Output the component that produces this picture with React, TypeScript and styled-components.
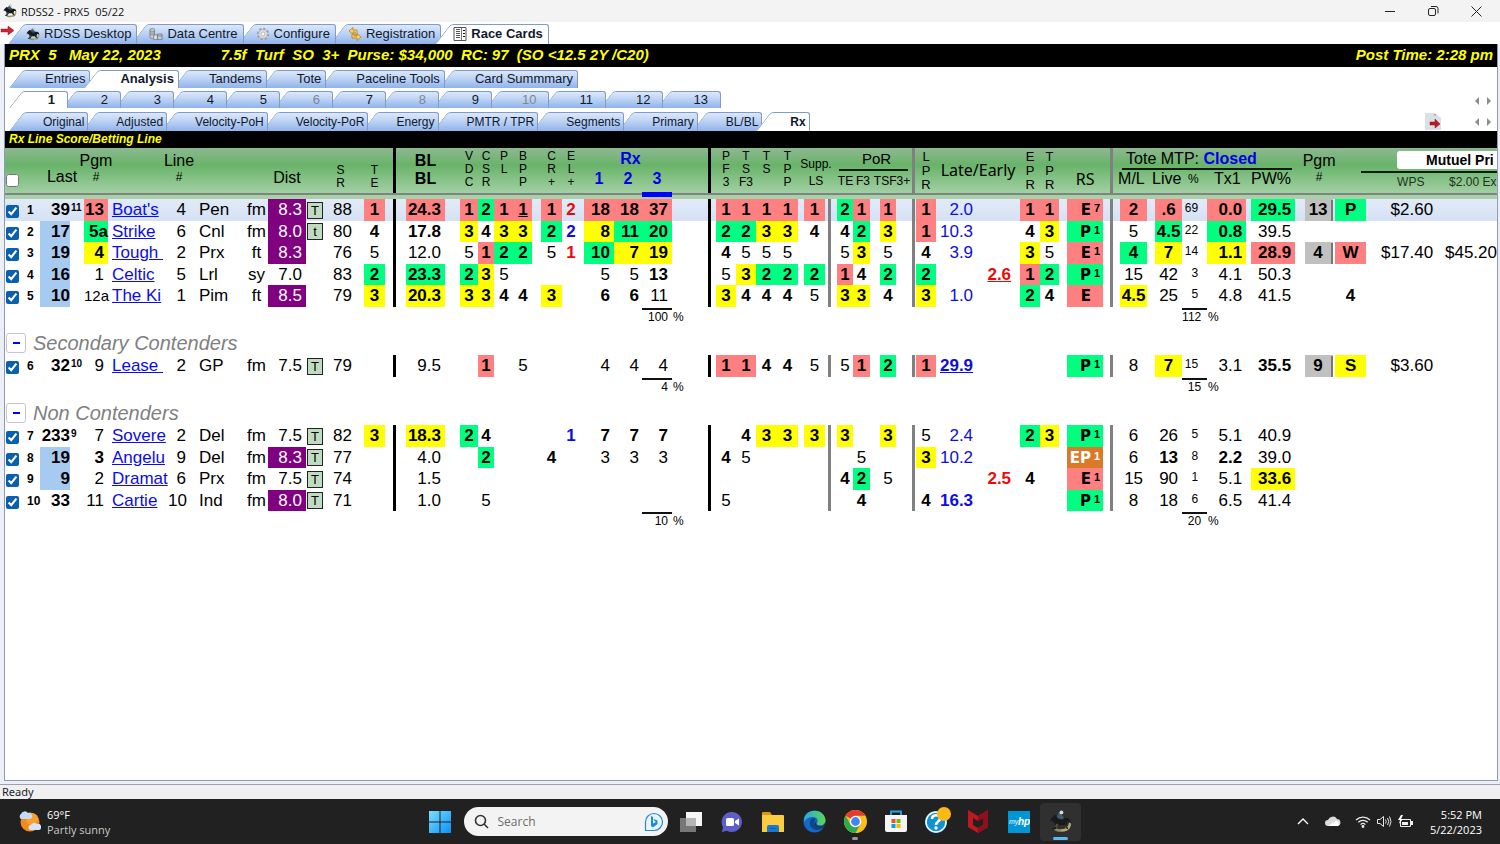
import React from "react";
import styled, { createGlobalStyle, css } from "styled-components";

const Global = createGlobalStyle`
  * { box-sizing: border-box; }
  body { margin: 0; background: #eceef8; font-family: "Liberation Sans", Arial, sans-serif; }
  button { font: inherit; color: inherit; border: 0; background: none; padding: 0; }
`;

const Page = styled.div`
  display: flex;
  flex-direction: column;
  min-height: 100vh;
  overflow: hidden;
`;

/* ---------- title bar ---------- */

const TitleBar = styled.header`
  display: flex;
  align-items: center;
  height: 22px;
  padding: 0 17px 0 3px;
  background: #f3f3f3;
`;
const Title = styled.h1`
  flex: 1;
  margin: 0 0 0 4px;
  font: 400 11px "Open Sans", sans-serif;
  color: #111;
  white-space: pre;
`;
const WindowControls = styled.div`
  display: flex;
  gap: 29px;
`;
const WindowButton = styled.button`
  width: 14px;
  height: 20px;
  svg { display: block; margin: auto; }
`;

/* ---------- tabs ---------- */

const TabStrip = styled.nav<{ $top: number }>`
  display: flex;
  align-items: flex-start;
  padding: ${(p) => p.$top}px 0 0 10px;
  background: #fff;
  isolation: isolate;
`;
const Tab = styled.button<{ $selected?: boolean; $order: number; $size?: "icon" | "number" | "small" }>`
  position: relative;
  isolation: isolate;
  display: flex;
  align-items: center;
  justify-content: flex-end;
  gap: 4px;
  flex: none;
  height: 18px;
  padding: 0 5px 0 30px;
  font-size: 13px;
  line-height: 16px;
  white-space: nowrap;
  color: #10182c;
  z-index: ${(p) => (p.$selected ? 50 : 40 - p.$order)};
  font-weight: ${(p) => (p.$selected ? 700 : 400)};
  ${(p) => p.$size === "icon" && css`height: 20px; padding: 0 6px 0 12px;`}
  ${(p) => p.$size === "number" && css`height: 17px; min-width: 53px; padding-right: 13px;`}
  ${(p) => p.$size === "small" && css`height: 19px; padding: 0 4px 0 28px; font-size: 12px;`}
  &:disabled { color: #7f8694; }

  &::before, &::after {
    content: "";
    position: absolute;
    z-index: -1;
    top: 0;
    bottom: 0;
    border-top: 1px solid #7f9cc8;
    background: ${(p) => (p.$selected ? "#fff" : "linear-gradient(#dbe8fb, #b9d0f4 50%, #8fb3ea)")};
  }
  &::before {
    left: -6px;
    width: 24px;
    border-left: 1px solid #7f9cc8;
    border-top-left-radius: 3px;
    transform: skewX(-38deg);
    transform-origin: bottom left;
  }
  &::after {
    left: 15px;
    right: 0;
    border-right: 1px solid #7f9cc8;
    border-top-right-radius: 3px;
  }
`;
const MainTabs = styled.div`
  display: flex;
  background: #fff;
  > svg { flex: none; margin: 3px 0 0; }
  > nav { padding-left: 0; }
`;
const StripTools = styled.div`
  display: flex;
  align-items: center;
  gap: 32px;
  height: 19px;
  margin-left: auto;
  padding-right: 4px;
`;
const Scroller = styled.div`
  display: flex;
  gap: 2px;
`;
const ScrollButton = styled.button`
  display: block;
  width: 9px;
  height: 18px;
`;

/* ---------- workspace ---------- */

const Workspace = styled.main`
  flex: 1;
  display: flex;
  flex-direction: column;
  margin: 0 2px 3px 4px;
  border: solid #8f98b4;
  border-width: 0 1px 1px;
  background: #fff;
  overflow: hidden;
`;
const RaceBar = styled.div`
  display: flex;
  justify-content: space-between;
  height: 23px;
  padding: 0 4px;
  background: #000;
  color: #ff0;
  font: italic 700 15px/22px "Liberation Sans", Arial, sans-serif;
  white-space: pre;
`;
const RaceInfo = styled.div`
  display: flex;
  gap: 60px;
`;
const ViewTitle = styled.h2`
  margin: 0;
  height: 17px;
  padding-left: 4px;
  background: #000;
  color: #ff0;
  font: italic 700 12px/16px "Liberation Sans", Arial, sans-serif;
`;

/* ---------- table ---------- */

const Table = styled.table`
  width: 100%;
  table-layout: fixed;
  border-collapse: separate;
  border-spacing: 0;
  font-size: 17px;
  line-height: 20px;
  white-space: nowrap;
`;
const HeadRow = styled.tr`
  height: 51px;
  background: linear-gradient(#8db890 0, #69b369 17px, #7fbf80 28px, #a3cfa5 45px, #7d867d 45px, #7d867d 47px, #a9cfab 47px, #a9cfab 51px);
`;
const Th = styled.th`
  height: 51px;
  padding: 0;
  font-weight: 400;
  font-size: 16px;
  vertical-align: top;
`;
const HeadBar = styled.div<{ $black?: boolean }>`
  width: 3px;
  height: 45px;
  margin-left: auto;
  background: ${(p) => (p.$black ? "#000" : "#808080")};
`;
const Stack = styled.div<{ $top?: number; $gap?: number; $bold?: boolean }>`
  display: flex;
  flex-direction: column;
  align-items: center;
  gap: ${(p) => p.$gap ?? 0}px;
  padding-top: ${(p) => p.$top ?? 4}px;
  line-height: 18px;
  font-weight: ${(p) => (p.$bold ? 700 : 400)};
`;
const Letters = styled.div<{ $top?: number; $large?: boolean }>`
  display: flex;
  flex-direction: column;
  align-items: center;
  padding-top: ${(p) => p.$top ?? 2}px;
  font-size: ${(p) => (p.$large ? 13 : 12)}px;
  line-height: ${(p) => (p.$large ? 14 : 13)}px;
`;
const Small = styled.span`
  font-size: 12px;
  line-height: 14px;
`;
const Tahoma = styled.span`
  font-family: "Noto Sans", sans-serif;
`;
const HeadCheck = styled.input`
  display: block;
  width: 13px;
  height: 13px;
  margin: 26px 0 0 1px;
`;
const RxHead = styled.div`
  display: grid;
  grid-template-columns: 30px 28px 30px;
  color: #0000e6;
  font-weight: 700;
  text-align: center;
  line-height: 20px;
  padding-top: 1px;
`;
const RxTitle = styled.span`
  grid-column: 1 / -1;
  padding-left: 5px;
`;
const RxColumn = styled.span<{ $current?: boolean }>`
  height: 28px;
  border-bottom: 5px solid ${(p) => (p.$current ? "#0000ff" : "transparent")};
`;
const PorHead = styled.div`
  display: grid;
  grid-template-columns: 17px 18px 1fr;
  font-size: 12px;
  line-height: 15px;
  text-align: center;
`;
const PorTitle = styled.span`
  grid-column: 1 / -1;
  margin: 0 4px 3px 2px;
  padding-left: 6px;
  border-bottom: 2px solid #101c10;
  font-size: 15px;
  line-height: 21px;
`;
const ToteHead = styled.div`
  display: grid;
  grid-template-columns: 34px 36px 26px 37px 1fr;
  padding: 2px 3px 0 5px;
  line-height: 18px;
  text-align: left;
  > ${Small} { line-height: 18px; }
`;
const ToteTitle = styled.span`
  grid-column: 1 / -1;
  margin: 0 0 0 4px;
  padding-left: 4px;
  border-bottom: 2px solid #101c10;
  strong { color: #0000e6; }
`;
const MutuelHead = styled.div`
  display: grid;
  grid-template-columns: 52px 1fr;
  padding-top: 3px;
  font-size: 12px;
  line-height: 18px;
  text-align: left;
`;
const MutuelTitle = styled.div`
  grid-column: 1 / -1;
  margin-left: -5px;
  padding: 0 0 2px 36px;
  border-bottom: 2px solid #101c10;
  span {
    display: block;
    padding-left: 29px;
    border-radius: 3px 0 0 3px;
    background: #fff;
    font: 700 14px/18px "Liberation Sans", Arial, sans-serif;
    overflow: hidden;
  }
`;
const MutuelLabel = styled.span`
  padding-left: 31px;
  color: #223022;
`;

const tones: Record<string, string> = {
  r: "background:#ff8080;font-weight:700;",
  g: "background:#00ff80;font-weight:700;",
  y: "background:#ffff00;font-weight:700;",
  k: "background:#c0c0c0;font-weight:700;",
  l: "background:#a6caf0;font-weight:700;",
  o: "background:#d97a28;font-weight:700;color:#fff;",
  p: "background:#800080;color:#fff;",
  b: "font-weight:700;",
  u: "text-decoration:underline;",
  B: "color:#0c0ce8;",
  R: "color:#f00808;",
};

const BodyRow = styled.tr<{ $current?: boolean }>`
  height: 22px;
  &:nth-child(even) { height: 21px; }
  ${(p) => p.$current && css`background: linear-gradient(#e2eaf7, #d5e2f4);`}
`;
const Td = styled.td<{ $tone: string; $align: string; $pad: number }>`
  padding: 0;
  text-align: ${(p) => p.$align};
  ${(p) => (p.$align === "right" ? `padding-right:${p.$pad}px;` : `padding-left:${p.$pad}px;`)}
  ${(p) => p.$tone.split("").map((t) => tones[t]).join("")}
`;
const BarTd = styled.td<{ $black?: boolean }>`
  padding: 0;
  border-right: 3px solid ${(p) => (p.$black ? "#000" : "#808080")};
`;
const RowNumber = styled.label`
  display: block;
  font: 700 12px/18px "Liberation Sans", Arial, sans-serif;
`;
const Tiny = styled.span`
  display: block;
  height: 20px;
  font-size: 10px;
  line-height: 16px;
  font-weight: 700;
`;
const Percent = styled.span`
  display: block;
  height: 20px;
  font-size: 12px;
  line-height: 16px;
`;
const Tight = styled.span`
  font-size: 15px;
`;
const HorseLink = styled.a`
  color: #0c0ce8;
`;
const TurfBox = styled.span`
  display: block;
  width: 16px;
  height: 17px;
  margin: 0 auto;
  border: 1px solid #222;
  background: #c0dcc0;
  font-size: 13px;
  line-height: 16px;
  text-align: center;
`;
const RowCheck = styled.input`
  display: block;
  width: 13px;
  height: 13px;
  margin: 3px 0 0 1px;
  accent-color: #0a60b0;
`;
const RunStyle = styled.div`
  display: flex;
  justify-content: flex-end;
  font: 700 15px/20px "DejaVu Sans", sans-serif;
  sup {
    width: 12px;
    padding-left: 3px;
    font: 700 11px/17px "Liberation Sans", Arial, sans-serif;
    vertical-align: top;
    text-align: left;
  }
`;
const ToteNumber = styled.span`
  display: block;
  height: 21px;
  border-right: 2px solid #777;
  text-align: center;
`;
const TotalRow = styled.tr`
  height: 24px;
  font-size: 12px;
  vertical-align: top;
  line-height: 15px;
`;
const TotalTd = styled.td<{ $pad: number }>`
  padding: 1px ${(p) => p.$pad}px 0 0;
  text-align: right;
  span {
    display: block;
    margin-right: -${(p) => p.$pad}px;
    padding-right: ${(p) => p.$pad}px;
    border-top: 2px solid #111;
  }
`;
const UnitTd = styled.td`
  padding: 3px 0 0 0;
  text-indent: 1px;
`;
const GroupCell = styled.td`
  height: 24px;
  padding: 0 0 0 1px;
`;
const GroupHeading = styled.div`
  display: flex;
  align-items: center;
  gap: 7px;
  height: 24px;
  color: #808080;
  font: italic 400 20px/22px "Liberation Sans", Arial, sans-serif;
`;
const Collapse = styled.button`
  display: flex;
  align-items: center;
  justify-content: center;
  width: 20px;
  height: 20px;
  border: 1px solid #c4c4d4;
  border-radius: 3px;
  background: #fff;
  &::after { content: ""; width: 7px; height: 2px; background: #00f; }
`;

/* ---------- footer ---------- */

const StatusBar = styled.div`
  height: 15px;
  padding-left: 2px;
  border-top: 1px solid #9aa0ad;
  background: #f0f0f0;
  font: 11px/13px "Noto Sans", sans-serif;
  color: #1c1c2c;
`;
const Taskbar = styled.footer`
  display: grid;
  grid-template-columns: 1fr auto 1fr;
  align-items: center;
  height: 45px;
  padding: 0 18px;
  background: #212121;
  color: #fff;
  font: 11px/15px "Open Sans", sans-serif;
`;
const Weather = styled.div`
  display: flex;
  align-items: center;
  gap: 6px;
  span { display: block; }
  span + span { color: #c9c9c9; }
`;
const Apps = styled.div`
  display: flex;
  align-items: center;
  margin-left: 9px;
`;
const SearchBox = styled.label`
  display: flex;
  align-items: center;
  gap: 9px;
  width: 204px;
  height: 29px;
  margin: 0 3px 0 13px;
  padding: 0 4px 0 10px;
  border-radius: 15px;
  background: #f3f3f3;
  svg { flex: none; }
`;
const SearchInput = styled.input`
  flex: 1;
  min-width: 0;
  border: 0;
  padding: 0;
  background: none;
  font: 12px "Open Sans", sans-serif;
  &::placeholder { color: #6c6c6c; opacity: 1; }
`;
const AppButton = styled.button<{ $state?: "running" | "active" }>`
  position: relative;
  display: flex;
  align-items: center;
  justify-content: center;
  width: 41px;
  height: 38px;
  border-radius: 4px;
  background: ${(p) => (p.$state === "active" ? "#303030" : "none")};
  &::after {
    content: "";
    position: absolute;
    bottom: 1px;
    height: 3px;
    border-radius: 2px;
    width: ${(p) => (p.$state === "active" ? 15 : p.$state === "running" ? 6 : 0)}px;
    background: ${(p) => (p.$state === "active" ? "#5fb8f0" : "#9a9a9a")};
  }
`;
const Start = styled.button`
  display: block;
  width: 22px;
  height: 22px;
`;
const Tray = styled.div`
  display: flex;
  align-items: center;
  justify-content: flex-end;
`;
const TrayIcons = styled.div`
  display: flex;
  align-items: center;
  gap: 6px;
  margin-right: 16px;
  svg:nth-child(1) { margin-right: 10px; }
  svg:nth-child(2) { margin-right: 8px; }
`;
const Clock = styled.div`
  text-align: right;
  span { display: block; }
`;

/* ---------- icons ---------- */

const HorseIcon = ({ size = 14 }: { size?: number }) => (
  <svg width={size} height={size} viewBox="0 0 24 24" aria-hidden="true">
    <path d="M6 18c3 3 11 3 14-1l2 1c-3 6-14 6-17 2z" fill="#8a9065" />
    <path d="M12 20c5 1 8-2 9-7l2 1c0 6-5 9-10 8z" fill="#b0aa78" />
    <path d="M2 9l4-4 3 1 4 2 6 0 3 2 1 4-2-2-2 0-1 4 2 3-1 1-4-4-5 0-3 4-4 0 1-1 2-1 0-4-3-3-2 1z" fill="#171b1f" />
    <path d="M8 7l2-4 3-2 2 2-2 2 3 3-2 2-4-1z" fill="#435a67" />
    <circle cx="13" cy="2.500" r="2" fill="#d9dadb" />
    <path d="M6 17l2-3 2 1-2 4zM16 15l3 3-2 1z" fill="#5f4a33" />
  </svg>
);
const RedArrow = () => (
  <svg width="14" height="11" viewBox="0 0 14 11" aria-hidden="true">
    <path d="M1 4h7V1l6 4.500-6 4.500V7H1z" fill="#cf2430" stroke="#8e1820" strokeWidth=".5" />
  </svg>
);
const DataIcon = () => (
  <svg width="14" height="14" viewBox="0 0 15 14" aria-hidden="true">
    <g stroke="#6f7478" strokeWidth=".8">
      <path d="M1 2q2.500-2 5 0v9q-2.500 1.500-5 0z" fill="#cfd3d2" /><path d="M1 4h5M1 6h5M1 8h5" />
      <path d="M5 8h4v5H5z" fill="#dfe3e8" /><path d="M9 7h5v6H9z" fill="#b9cbe6" /><path d="M9 9h5" />
    </g>
  </svg>
);
const GearIcon = () => (
  <svg width="14" height="14" viewBox="0 0 14 14" aria-hidden="true">
    <circle cx="7" cy="7" r="5.200" fill="#e4e6e9" stroke="#9da2a8" strokeWidth="2" strokeDasharray="2.400 1.600" />
    <circle cx="7" cy="7" r="4.300" fill="#dfe2e6" stroke="#aaaeb4" strokeWidth=".8" />
    <circle cx="7" cy="7" r="2" fill="#f7f7f7" stroke="#999" strokeWidth=".6" />
  </svg>
);
const RegisterIcon = () => (
  <svg width="14" height="14" viewBox="0 0 14 14" aria-hidden="true">
    <path d="M1 4l4-3.500V3h4v5H7V5H5v2.500z" fill="#f7cf62" stroke="#bb7d1e" strokeWidth=".8" />
    <path d="M13 10l-4 3.500V11H4V7h2v2h3V6.500z" fill="#f7cf62" stroke="#bb7d1e" strokeWidth=".8" />
  </svg>
);
const CardIcon = () => (
  <svg width="14" height="14" viewBox="0 0 14 14" aria-hidden="true">
    <path d="M1 .5h12v13H1z" fill="#fff" stroke="#555" />
    <path d="M3 2.500h4M3 4.500h4M3 6.500h4M3 8.500h4M3 10.500h4" stroke="#555" />
    <path d="M8.500 1v12" stroke="#777" /><path d="M10 3.500h2M10 6.500h2M10 9.500h2" stroke="#111" />
  </svg>
);
const ExitIcon = () => (
  <svg width="16" height="17" viewBox="0 0 16 17" aria-hidden="true">
    <path d="M0 0h12l4 4v13H0z" fill="#dcdfe6" /><path d="M10 0l6 5V0z" fill="#fff" /><path d="M10 1v2" stroke="#889" />
    <path d="M5 9h5V6l5 5-5 4v-3H5z" fill="#c01822" stroke="#7c1016" strokeWidth=".5" />
  </svg>
);
const Scroll = () => (
  <Scroller>
    <ScrollButton aria-label="Scroll left">
      <svg width="9" height="10" viewBox="0 0 9 10"><path d="M6 1v8L2 5z" fill="#8c8c8c" /></svg>
    </ScrollButton>
    <ScrollButton aria-label="Scroll right">
      <svg width="9" height="10" viewBox="0 0 9 10"><path d="M3 1v8l4-4z" fill="#8c8c8c" /></svg>
    </ScrollButton>
  </Scroller>
);

/* ---------- data ---------- */

type Column = { key?: string; w: number; align?: "left" | "right" | "center"; pad?: number; bar?: "black" | "gray" };
const gap = (w: number): Column => ({ w });
const num = (key: string, w: number): Column => ({ key, w, align: "center" });
const right = (key: string, w: number, pad: number): Column => ({ key, w, align: "right", pad });

const columns: Column[] = [
  { key: "check", w: 19 }, { key: "n", w: 16, pad: 3 }, right("last", 30, 0), { key: "sup", w: 14, pad: 1 },
  right("pgm", 24, 4), { key: "name", w: 60, pad: 4 }, right("line", 22, 4), { key: "trk", w: 55, pad: 9 },
  num("surf", 23), right("dist", 38, 4), num("turf", 18), right("sr", 33, 5), gap(7), num("te", 21),
  gap(8), { w: 3, bar: "black" }, gap(10), right("bl", 39, 4), gap(15),
  num("v", 18), num("c", 16), num("p", 20), num("b", 18), gap(9), num("cr", 21), num("el", 18), gap(4),
  right("r1", 30, 4), right("r2", 28, 3), right("r3", 30, 4), { key: "unit", w: 36, pad: 1 }, { w: 3, bar: "black" }, gap(5),
  num("pf", 20), num("tsf", 20), num("ts", 21), num("tpp", 21), gap(6), num("ls", 21), gap(3), { w: 3, bar: "gray" }, gap(6),
  num("pte", 16), num("pf3", 17), gap(10), num("ptsf", 16), gap(16), { w: 3, bar: "gray" }, gap(1),
  num("lpr", 20), right("late", 37, 0), right("early", 38, 0), gap(9),
  num("epr", 20), num("tpr", 19), gap(8), right("rs", 36, 0), { w: 10, bar: "gray" }, gap(7),
  num("ml", 27), gap(8), num("live", 27), right("pct", 25, 9), right("tx", 39, 4), gap(5), right("pw", 44, 4), gap(10),
  num("tpgm", 28), gap(2), num("pos", 31), right("wps", 67, 0), right("ex", 64, 0),
];

type Row = Record<string, string>;
const primary: Row[] = [
  { n: "1", last: "b|39", sup: "11", pgm: "r|13", name: "Boat's", line: "4", trk: "Pen", surf: "fm", dist: "p|8.3", turf: "T", sr: "88", te: "r|1", bl: "r|24.3", v: "r|1", c: "g|2", p: "r|1", b: "ru|1", cr: "r|1", el: "bR|2", r1: "r|18", r2: "r|18", r3: "r|37", pf: "r|1", tsf: "r|1", ts: "r|1", tpp: "r|1", ls: "r|1", pte: "g|2", pf3: "r|1", ptsf: "r|1", lpr: "r|1", late: "B|2.0", epr: "r|1", tpr: "r|1", rs: "r|E7", ml: "r|2", live: "r|.6", pct: "69", tx: "r|0.0", pw: "g|29.5", tpgm: "k|13", pos: "g|P", wps: "$2.60" },
  { n: "2", last: "l|17", pgm: "g|5a", name: "Strike", line: "6", trk: "Cnl", surf: "fm", dist: "p|8.0", turf: "t", sr: "80", te: "b|4", bl: "b|17.8", v: "y|3", c: "b|4", p: "y|3", b: "y|3", cr: "g|2", el: "bB|2", r1: "y|8", r2: "g|11", r3: "g|20", pf: "g|2", tsf: "g|2", ts: "y|3", tpp: "y|3", ls: "b|4", pte: "b|4", pf3: "g|2", ptsf: "y|3", lpr: "r|1", late: "B|10.3", epr: "b|4", tpr: "y|3", rs: "g|P1", ml: "5", live: "g|4.5", pct: "22", tx: "g|0.8", pw: "39.5" },
  { n: "3", last: "l|19", pgm: "y|4", name: "Tough\u00a0", line: "2", trk: "Prx", surf: "ft", dist: "p|8.3", sr: "76", te: "5", bl: "12.0", v: "5", c: "r|1", p: "g|2", b: "g|2", cr: "5", el: "bR|1", r1: "g|10", r2: "y|7", r3: "y|19", pf: "b|4", tsf: "5", ts: "5", tpp: "5", pte: "5", pf3: "y|3", ptsf: "5", lpr: "b|4", late: "B|3.9", epr: "y|3", tpr: "5", rs: "r|E1", ml: "g|4", live: "y|7", pct: "14", tx: "y|1.1", pw: "r|28.9", tpgm: "k|4", pos: "r|W", wps: "$17.40", ex: "$45.20" },
  { n: "4", last: "l|16", pgm: "1", name: "Celtic", line: "5", trk: "Lrl", surf: "sy", dist: "7.0", sr: "83", te: "g|2", bl: "g|23.3", v: "g|2", c: "y|3", p: "5", r1: "5", r2: "5", r3: "b|13", pf: "5", tsf: "y|3", ts: "g|2", tpp: "g|2", ls: "g|2", pte: "r|1", pf3: "b|4", ptsf: "g|2", lpr: "g|2", early: "buR|2.6", epr: "r|1", tpr: "g|2", rs: "g|P1", ml: "15", live: "42", pct: "3", tx: "4.1", pw: "50.3" },
  { n: "5", last: "l|10", pgm: "12a", name: "The Ki", line: "1", trk: "Pim", surf: "ft", dist: "p|8.5", sr: "79", te: "y|3", bl: "y|20.3", v: "y|3", c: "y|3", p: "b|4", b: "b|4", cr: "y|3", r1: "b|6", r2: "b|6", r3: "11", pf: "y|3", tsf: "b|4", ts: "b|4", tpp: "b|4", ls: "5", pte: "y|3", pf3: "y|3", ptsf: "b|4", lpr: "y|3", late: "B|1.0", epr: "g|2", tpr: "b|4", rs: "r|E", ml: "y|4.5", live: "25", pct: "5", tx: "4.8", pw: "41.5", pos: "b|4" },
];
const secondary: Row[] = [
  { n: "6", last: "b|32", sup: "10", pgm: "9", name: "Lease\u00a0", line: "2", trk: "GP", surf: "fm", dist: "7.5", turf: "T", sr: "79", bl: "9.5", c: "r|1", b: "5", r1: "4", r2: "4", r3: "4", pf: "r|1", tsf: "r|1", ts: "b|4", tpp: "b|4", ls: "5", pte: "5", pf3: "r|1", ptsf: "g|2", lpr: "r|1", late: "buB|29.9", rs: "g|P1", ml: "8", live: "y|7", pct: "15", tx: "3.1", pw: "b|35.5", tpgm: "k|9", pos: "y|S", wps: "$3.60" },
];
const nonContenders: Row[] = [
  { n: "7", last: "b|233", sup: "9", pgm: "7", name: "Sovere", line: "2", trk: "Del", surf: "fm", dist: "7.5", turf: "T", sr: "82", te: "y|3", bl: "y|18.3", v: "g|2", c: "b|4", el: "bB|1", r1: "b|7", r2: "b|7", r3: "b|7", tsf: "b|4", ts: "y|3", tpp: "y|3", ls: "y|3", pte: "y|3", ptsf: "y|3", lpr: "5", late: "B|2.4", epr: "g|2", tpr: "y|3", rs: "g|P1", ml: "6", live: "26", pct: "5", tx: "5.1", pw: "40.9" },
  { n: "8", last: "l|19", pgm: "b|3", name: "Angelu", line: "9", trk: "Del", surf: "fm", dist: "p|8.3", turf: "T", sr: "77", bl: "4.0", c: "g|2", cr: "b|4", r1: "3", r2: "3", r3: "3", pf: "b|4", tsf: "5", pf3: "5", lpr: "y|3", late: "B|10.2", rs: "o|EP1", ml: "6", live: "b|13", pct: "8", tx: "b|2.2", pw: "39.0" },
  { n: "9", last: "l|9", pgm: "2", name: "Dramat", line: "6", trk: "Prx", surf: "fm", dist: "7.5", turf: "T", sr: "74", bl: "1.5", pte: "b|4", pf3: "g|2", ptsf: "5", early: "bR|2.5", epr: "b|4", rs: "r|E1", ml: "15", live: "90", pct: "1", tx: "5.1", pw: "y|33.6" },
  { n: "10", last: "b|33", pgm: "11", name: "Cartie", line: "10", trk: "Ind", surf: "fm", dist: "p|8.0", turf: "T", sr: "71", bl: "1.0", c: "5", pf: "5", pf3: "b|4", lpr: "b|4", late: "bB|16.3", rs: "g|P1", ml: "8", live: "18", pct: "6", tx: "6.5", pw: "41.4" },
];

/* ---------- components ---------- */

function content(key: string | undefined, text: string, n: string) {
  if (key === "check") return <RowCheck id={`pick-${n}`} type="checkbox" defaultChecked />;
  if (!text) return null;
  switch (key) {
    case "n": return <RowNumber htmlFor={`pick-${n}`}>{text}</RowNumber>;
    case "sup": return <Tiny>{text}</Tiny>;
    case "pct": return <Percent>{text}</Percent>;
    case "pgm": return text.length > 2 ? <Tight>{text}</Tight> : text;
    case "name": return <HorseLink href="#">{text}</HorseLink>;
    case "turf": return <TurfBox>{text}</TurfBox>;
    case "tpgm": return <ToteNumber>{text}</ToteNumber>;
    case "rs": {
      const [, letters, level] = text.match(/^([A-Z]+)(\d?)$/)!;
      return <RunStyle>{letters}<sup>{level}</sup></RunStyle>;
    }
    default: return text;
  }
}

function Rows({ rows }: { rows: Row[] }) {
  return (
    <tbody>
      {rows.map((row) => (
        <BodyRow key={row.n} $current={row.n === "1"}>
          {columns.map((col, i) => {
            if (col.bar) return <BarTd key={i} $black={col.bar === "black"} />;
            const raw = (col.key && row[col.key]) || "";
            const cut = raw.indexOf("|");
            const tone = cut < 0 ? "" : raw.slice(0, cut);
            const text = raw.slice(cut + 1);
            const pad = col.key === "pgm" && text.endsWith("a") ? 0 : col.pad ?? 0;
            return (
              <Td key={i} $tone={tone} $align={col.align ?? "left"} $pad={pad}>
                {content(col.key, text, row.n)}
              </Td>
            );
          })}
        </BodyRow>
      ))}
    </tbody>
  );
}

function Totals({ rx, tote }: { rx: string; tote: string }) {
  return (
    <tbody>
      <TotalRow>
        {columns.map((col, i) => {
          if (col.key === "r3") return <TotalTd key={i} $pad={4}><span>{rx}</span></TotalTd>;
          if (col.key === "pct") return <TotalTd key={i} $pad={6}><span>{tote}</span></TotalTd>;
          if (col.key === "unit" || col.key === "tx") return <UnitTd key={i}>%</UnitTd>;
          return <td key={i} />;
        })}
      </TotalRow>
    </tbody>
  );
}

function Group({ title }: { title: string }) {
  return (
    <tbody>
      <tr>
        <GroupCell colSpan={columns.length}>
          <GroupHeading><Collapse aria-label={`Collapse ${title}`} />{title}</GroupHeading>
        </GroupCell>
      </tr>
    </tbody>
  );
}

const Vertical = ({ text, top, large }: { text: string; top?: number; large?: boolean }) => (
  <Th scope="col">
    <Letters $top={top} $large={large}>{text.split(" ").map((t, i) => <span key={i}>{t}</span>)}</Letters>
  </Th>
);
const Bar = ({ black }: { black?: boolean }) => <Th as="td"><HeadBar $black={black} /></Th>;
const Blank = ({ span = 1 }: { span?: number }) => <Th as="td" colSpan={span} />;

function TableHead() {
  return (
    <thead>
      <HeadRow>
        <Th><HeadCheck type="checkbox" aria-label="Select all" /></Th>
        <Blank />
        <Th colSpan={2}><Stack $top={20}>Last</Stack></Th>
        <Th><Stack>Pgm<Small>#</Small></Stack></Th>
        <Blank />
        <Th><Stack>Line<Small>#</Small></Stack></Th>
        <Blank span={2} />
        <Th><Stack $top={21}>Dist</Stack></Th>
        <Blank />
        <Vertical text="S R" top={16} />
        <Blank />
        <Vertical text="T E" top={16} />
        <Blank />
        <Bar black />
        <Blank />
        <Th><Stack $bold><span>BL</span><span>BL</span></Stack></Th>
        <Blank />
        <Vertical text="V D C" />
        <Vertical text="C S R" />
        <Vertical text="P L" />
        <Vertical text="B P P" />
        <Blank />
        <Vertical text="C R +" />
        <Vertical text="E L +" />
        <Blank />
        <Th colSpan={3}>
          <RxHead>
            <RxTitle>Rx</RxTitle>
            <RxColumn>1</RxColumn><RxColumn>2</RxColumn><RxColumn $current>3</RxColumn>
          </RxHead>
        </Th>
        <Blank />
        <Bar black />
        <Blank />
        <Vertical text="P F 3" />
        <Vertical text="T S F3" />
        <Vertical text="T S" />
        <Vertical text="T P P" />
        <Blank />
        <Th colSpan={2}><Stack $top={9} $gap={3}><Small>Supp.</Small><Small>LS</Small></Stack></Th>
        <Blank span={2} />
        <Th colSpan={5}>
          <PorHead><PorTitle>PoR</PorTitle><span>TE</span><span>F3</span><span>TSF3+</span></PorHead>
        </Th>
        <Bar />
        <Blank />
        <Vertical text="L P R" large />
        <Th colSpan={3}><Stack $top={13}><Tahoma>Late/Early</Tahoma></Stack></Th>
        <Vertical text="E P R" large />
        <Vertical text="T P R" large />
        <Blank />
        <Th><Stack $top={22}><Tahoma>RS</Tahoma></Stack></Th>
        <Bar />
        <Th colSpan={8}>
          <ToteHead>
            <ToteTitle>Tote MTP: <strong>Closed</strong></ToteTitle>
            <span>M/L</span><span>Live</span><Small>%</Small><span>Tx1</span><span>PW%</span>
          </ToteHead>
        </Th>
        <Blank />
        <Th><Stack>Pgm<Small>#</Small></Stack></Th>
        <Blank span={2} />
        <Th colSpan={2}>
          <MutuelHead>
            <MutuelTitle><span>Mutuel Pri</span></MutuelTitle>
            <MutuelLabel>WPS</MutuelLabel><MutuelLabel>$2.00 Ex</MutuelLabel>
          </MutuelHead>
        </Th>
      </HeadRow>
    </thead>
  );
}

const mainTabs = [
  { label: "RDSS Desktop", icon: <HorseIcon /> },
  { label: "Data Centre", icon: <DataIcon /> },
  { label: "Configure", icon: <GearIcon /> },
  { label: "Registration", icon: <RegisterIcon /> },
  { label: "Race Cards", icon: <CardIcon />, selected: true },
];
const sectionTabs = ["Entries", "Analysis", "Tandems", "Tote", "Paceline Tools", "Card Summmary"];
const races = ["1", "2", "3", "4", "5", "6", "7", "8", "9", "10", "11", "12", "13"];
const scratched = ["6", "8", "10"];
const viewTabs = ["Original", "Adjusted", "Velocity-PoH", "Velocity-PoR", "Energy", "PMTR / TPR", "Segments", "Primary", "BL/BL", "Rx"];

export default function App() {
  return (
    <Page>
      <Global />
      <TitleBar>
        <HorseIcon />
        <Title>RDSS2 - PRX5  05/22</Title>
        <WindowControls>
          <WindowButton aria-label="Minimize"><svg width="10" height="10"><path d="M0 5.500h10" stroke="#222" /></svg></WindowButton>
          <WindowButton aria-label="Restore">
            <svg width="11" height="11" fill="none" stroke="#222"><rect x=".5" y="2.500" width="7" height="7" rx="1.500" /><path d="M3 .5h5a2 2 0 0 1 2 2v5" /></svg>
          </WindowButton>
          <WindowButton aria-label="Close"><svg width="11" height="11"><path d="M.5.5l10 10M10.500.5l-10 10" stroke="#222" /></svg></WindowButton>
        </WindowControls>
      </TitleBar>
      <MainTabs>
        <RedArrow />
        <TabStrip $top={2}>
          {mainTabs.map((t, i) => (
            <Tab key={t.label} $size="icon" $order={i} $selected={t.selected}>{t.icon}{t.label}</Tab>
          ))}
        </TabStrip>
      </MainTabs>
      <Workspace>
        <RaceBar>
          <RaceInfo>
            <span>PRX  5   May 22, 2023</span>
            <span>7.5f  Turf  SO  3+  Purse: $34,000  RC: 97  (SO &lt;12.5 2Y /C20)</span>
          </RaceInfo>
          <span>Post Time: 2:28 pm</span>
        </RaceBar>
        <TabStrip $top={3}>
          {sectionTabs.map((t, i) => <Tab key={t} $order={i} $selected={t === "Analysis"}>{t}</Tab>)}
        </TabStrip>
        <TabStrip $top={3}>
          {races.map((t, i) => (
            <Tab key={t} $size="number" $order={i} $selected={t === "1"} disabled={scratched.includes(t)}>{t}</Tab>
          ))}
          <StripTools><Scroll /></StripTools>
        </TabStrip>
        <TabStrip $top={2}>
          {viewTabs.map((t, i) => <Tab key={t} $size="small" $order={i} $selected={t === "Rx"}>{t}</Tab>)}
          <StripTools><ExitIcon /><Scroll /></StripTools>
        </TabStrip>
        <ViewTitle>Rx Line Score/Betting Line</ViewTitle>
        <Table>
          <colgroup>
            {columns.map((c, i) => <col key={i} style={{ width: c.key === "ex" ? undefined : c.w }} />)}
          </colgroup>
          <TableHead />
          <Rows rows={primary} />
          <Totals rx="100" tote="112" />
          <Group title="Secondary Contenders" />
          <Rows rows={secondary} />
          <Totals rx="4" tote="15" />
          <Group title="Non Contenders" />
          <Rows rows={nonContenders} />
          <Totals rx="10" tote="20" />
        </Table>
      </Workspace>
      <StatusBar>Ready</StatusBar>
      <Taskbar>
        <Weather>
          <svg width="23" height="23" viewBox="0 0 23 23" aria-hidden="true">
            <circle cx="12" cy="12" r="9.500" fill="#f08c1c" /><circle cx="14" cy="9" r="6" fill="#f8a838" opacity=".7" />
            <path d="M3 9a3 3 0 0 1 0-5 4 4 0 0 1 7-1 3 3 0 0 1 2 6z" fill="#c5dcf8" />
            <path d="M13 20a2.500 2.500 0 0 1 0-5 4 4 0 0 1 6-1 3 3 0 0 1 2 6z" fill="#d5e4fb" />
          </svg>
          <div><span>69°F</span><span>Partly sunny</span></div>
        </Weather>
        <Apps>
          <Start aria-label="Start">
            <svg width="22" height="22" viewBox="0 0 22 22">
              <defs><linearGradient id="win" x1="0" y1="0" x2="1" y2="1"><stop stopColor="#7be0ff" /><stop offset="1" stopColor="#0a90f5" /></linearGradient></defs>
              <path d="M0 0h10.500v10.500H0zM11.500 0H22v10.500H11.500zM0 11.500h10.500V22H0zM11.500 11.500H22V22H11.500z" fill="url(#win)" />
            </svg>
          </Start>
          <SearchBox>
            <svg width="15" height="15" viewBox="0 0 15 15" fill="none" stroke="#333" strokeWidth="1.600"><circle cx="6.500" cy="6.500" r="5" /><path d="M10 10l4 4" /></svg>
            <SearchInput placeholder="Search" aria-label="Search" />
            <svg width="20" height="20" viewBox="0 0 20 20">
              <path d="M1.500 18.500V10a8.500 8.500 0 1 1 8.500 8.500z" fill="#e9f5fd" stroke="#2a86d0" strokeWidth="1.200" />
              <path d="M7 4l2 1v6.500l3-1.500-1.500-1-1-2 4 1.500v3.500L9 15.500 7 14z" fill="#1b8ae0" />
            </svg>
          </SearchBox>
          <AppButton aria-label="Task view">
            <svg width="22" height="22" viewBox="0 0 22 22"><path d="M6 1h16v14H6z" fill="#f5f5f5" /><path d="M0 7h16v14H0z" fill="#777" /><path d="M6 7h10v8H6z" fill="#b5b5b5" /></svg>
          </AppButton>
          <AppButton aria-label="Chat">
            <svg width="22" height="22" viewBox="0 0 22 22"><path d="M11 1a10 10 0 1 1-5 18.700L1 21l1-5A10 10 0 0 1 11 1z" fill="#5b5fc7" /><rect x="5" y="7" width="8" height="8" rx="1.500" fill="#fff" /><path d="M14 10l4-2.500v7L14 12z" fill="#fff" /></svg>
          </AppButton>
          <AppButton aria-label="File Explorer">
            <svg width="24" height="22" viewBox="0 0 24 22"><path d="M1 2a1 1 0 0 1 1-1h7l2 3H1z" fill="#d9980e" /><path d="M1 4h21a1 1 0 0 1 1 1v16H1z" fill="#fbcb42" /><path d="M6 21v-5a2 2 0 0 1 2-2h8a2 2 0 0 1 2 2v5z" fill="#1979d2" /><path d="M9 17h6v1H9z" fill="#0c59a4" /></svg>
          </AppButton>
          <AppButton aria-label="Edge">
            <svg width="23" height="23" viewBox="0 0 23 23">
              <defs><linearGradient id="edge" x1="0" y1="0" x2="1" y2="0"><stop stopColor="#2aa7e8" /><stop offset="1" stopColor="#5bd84a" /></linearGradient></defs>
              <circle cx="11.500" cy="11.500" r="11" fill="#1668c0" />
              <path d="M1 9C3-2 21-2 22.500 10c0 4-3 6-7 5-2-.5-2-2-1-3 1-3-2-5-5-5-4 0-7 2-8.500 5z" fill="url(#edge)" />
              <path d="M8 9c-3 5 0 11 6 11 3 0 5-1 6.500-3-4 1.500-9 .5-9-5 0-2 1-3 2-3-2-1-4-1-5.500 0z" fill="#0c4590" />
              <path d="M14 11c-2 2-1 5 2 5 3 .5 5-.5 6-3l2 5-4-.5c-5 1-9-1-8-5z" fill="#212121" opacity=".7" />
            </svg>
          </AppButton>
          <AppButton aria-label="Chrome" $state="running">
            <svg width="23" height="23" viewBox="0 0 22 22">
              <circle cx="11" cy="11" r="11" fill="#fbc116" /><path d="M11 11L1.500 5.500A11 11 0 0 1 20.500 5.500H11z" fill="#e33b2e" />
              <path d="M1.500 5.500A11 11 0 0 0 11 22l4.800-8.300H6.200z" fill="#2da94f" /><circle cx="11" cy="11" r="5.500" fill="#fff" /><circle cx="11" cy="11" r="4.200" fill="#4285f4" />
            </svg>
          </AppButton>
          <AppButton aria-label="Store">
            <svg width="22" height="23" viewBox="0 0 22 23"><path d="M6 6V1.500h10V6" fill="none" stroke="#2ba7e0" strokeWidth="1.800" /><path d="M0 5h22v15a2 2 0 0 1-2 2H2a2 2 0 0 1-2-2z" fill="#f6f6f6" /><path d="M6.500 9h4v4h-4z" fill="#f04e23" /><path d="M11.500 9h4v4h-4z" fill="#7db900" /><path d="M6.500 14h4v4h-4z" fill="#00a3ee" /><path d="M11.500 14h4v4h-4z" fill="#ffb800" /></svg>
          </AppButton>
          <AppButton aria-label="Help">
            <svg width="28" height="29" viewBox="0 0 28 29"><circle cx="13" cy="15" r="11" fill="#0f93d2" /><circle cx="13" cy="15" r="10" fill="none" stroke="#fff" strokeWidth="1.500" /><path d="M9 12c0-5 8-5 8-.5 0 3-4 3-4 6.500" fill="none" stroke="#fff" strokeWidth="2.600" /><circle cx="13" cy="21" r="1.700" fill="#fff" /><circle cx="21" cy="7" r="7" fill="#fdb813" /></svg>
          </AppButton>
          <AppButton aria-label="McAfee">
            <svg width="20" height="23" viewBox="0 0 20 23"><path d="M0 0l10 6L20 0v17l-10 6-10-6zM5 8v7l5 3 5-3V8L10 11z" fill="#c01823" fillRule="evenodd" /><path d="M10 6L20 0v17l-10 6v-5l5-3V8l-5 3z" fill="#8f101a" /></svg>
          </AppButton>
          <AppButton aria-label="myHP">
            <svg width="22" height="22" viewBox="0 0 22 22"><path d="M0 0h22v22H0z" fill="#0096d6" /><text x="1" y="13" fontSize="7" fontStyle="italic" fill="#fff" fontFamily="Liberation Sans">my</text><text x="10" y="14" fontSize="10" fontWeight="700" fontStyle="italic" fill="#fff" fontFamily="Liberation Sans">hp</text></svg>
          </AppButton>
          <AppButton aria-label="RDSS2" $state="active"><HorseIcon size={23} /></AppButton>
        </Apps>
        <Tray>
          <TrayIcons>
            <svg width="12" height="10" fill="none" stroke="#fff" strokeWidth="1.300"><path d="M1 7l5-5 5 5" /></svg>
            <svg width="16" height="11" viewBox="0 0 16 11"><path d="M3 10a3 3 0 0 1 0-6 5 5 0 0 1 9-1 3.600 3.600 0 0 1 1 7z" fill="#dcdcdc" /><path d="M3 10l8-5a3 3 0 0 1 2 5z" fill="#fff" /></svg>
            <svg width="16" height="13" viewBox="0 0 16 13" fill="none" stroke="#e8e8e8" strokeWidth="1.300"><path d="M1 5a10 10 0 0 1 14 0M3.300 7.300a6.600 6.600 0 0 1 9.400 0M5.600 9.600a3.400 3.400 0 0 1 4.800 0" /><circle cx="8" cy="11.500" r=".8" fill="#fff" /></svg>
            <svg width="15" height="13" viewBox="0 0 15 13" fill="none" stroke="#e8e8e8"><path d="M.5 4.500H3l3.500-3v10L3 8.500H.5zM8.500 4.500q1.500 2 0 4M10.500 3q2.500 3.500 0 7M12.500 1.500q3 5 0 10" /></svg>
            <svg width="16" height="13" viewBox="0 0 16 13"><path d="M2.500 4.500h10v7h-10z" fill="none" stroke="#eee" /><path d="M4 7h6v3H4zM13 6h2v4h-2z" fill="#eee" /><path d="M3 0L0 5h2L1 9l4-5H3l2-4z" fill="#fff" /></svg>
          </TrayIcons>
          <Clock><span>5:52 PM</span><span>5/22/2023</span></Clock>
        </Tray>
      </Taskbar>
    </Page>
  );
}
